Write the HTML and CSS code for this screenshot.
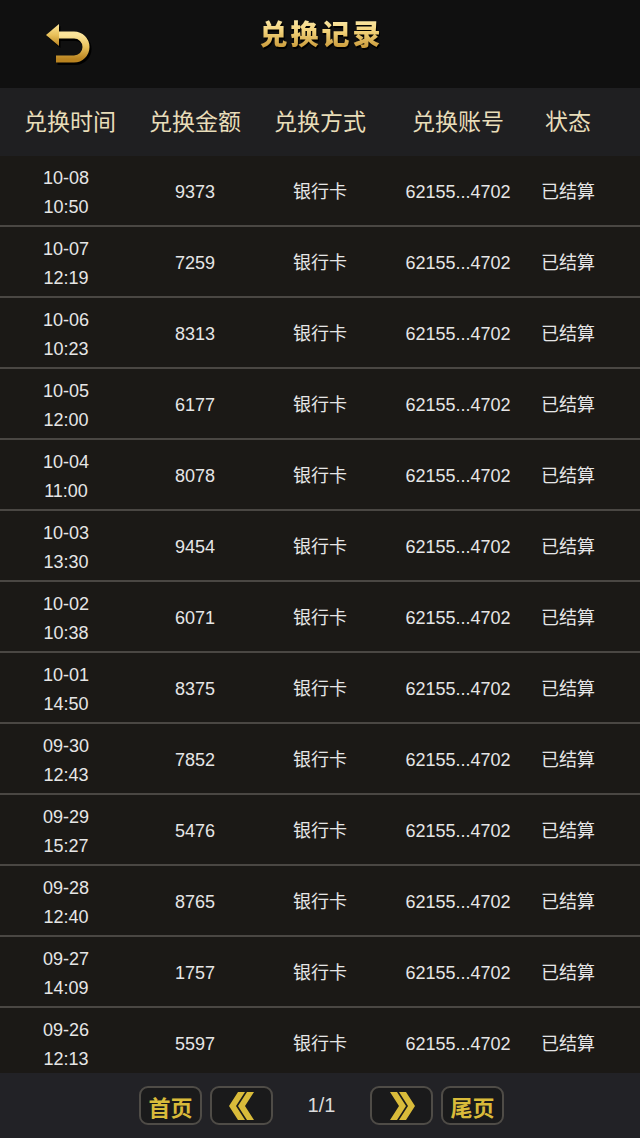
FILE: index.html
```html
<!DOCTYPE html>
<html lang="zh-CN">
<head>
<meta charset="utf-8">
<title>兑换记录</title>
<link rel="stylesheet" href="styles.css">
</head>
<body>
<div class="app">
  <header class="topbar">
    <button class="back" aria-label="返回">
      <svg width="52" height="48" viewBox="0 0 52 48">
        <defs>
          <linearGradient id="g" x1="0" y1="0" x2="0" y2="1">
            <stop offset="0" stop-color="#fbe49a"/>
            <stop offset="0.5" stop-color="#e9c15a"/>
            <stop offset="1" stop-color="#b98320"/>
          </linearGradient>
        </defs>
        <path d="M14 15 H32 A12 12 0 0 1 32 39 H14" fill="none" stroke="#000" stroke-width="8" transform="translate(1.5,2)"/>
        <polygon points="4,15 17,4 17,26" fill="#000" transform="translate(1.5,2)"/>
        <path d="M14 15 H32 A12 12 0 0 1 32 39 H14" fill="none" stroke="url(#g)" stroke-width="7"/>
        <polygon points="4,15 17,4 17,26" fill="url(#g)"/>
      </svg>
    </button>
    <h1 class="title">兑换记录</h1>
  </header>

  <div class="cols colhead">
    <span>兑换时间</span>
    <span>兑换金额</span>
    <span>兑换方式</span>
    <span>兑换账号</span>
    <span>状态</span>
  </div>

  <div class="list">
    <div class="cols row"><span class="time">10-08<br>10:50</span><span>9373</span><span>银行卡</span><span>62155...4702</span><span>已结算</span></div>
    <div class="cols row"><span class="time">10-07<br>12:19</span><span>7259</span><span>银行卡</span><span>62155...4702</span><span>已结算</span></div>
    <div class="cols row"><span class="time">10-06<br>10:23</span><span>8313</span><span>银行卡</span><span>62155...4702</span><span>已结算</span></div>
    <div class="cols row"><span class="time">10-05<br>12:00</span><span>6177</span><span>银行卡</span><span>62155...4702</span><span>已结算</span></div>
    <div class="cols row"><span class="time">10-04<br>11:00</span><span>8078</span><span>银行卡</span><span>62155...4702</span><span>已结算</span></div>
    <div class="cols row"><span class="time">10-03<br>13:30</span><span>9454</span><span>银行卡</span><span>62155...4702</span><span>已结算</span></div>
    <div class="cols row"><span class="time">10-02<br>10:38</span><span>6071</span><span>银行卡</span><span>62155...4702</span><span>已结算</span></div>
    <div class="cols row"><span class="time">10-01<br>14:50</span><span>8375</span><span>银行卡</span><span>62155...4702</span><span>已结算</span></div>
    <div class="cols row"><span class="time">09-30<br>12:43</span><span>7852</span><span>银行卡</span><span>62155...4702</span><span>已结算</span></div>
    <div class="cols row"><span class="time">09-29<br>15:27</span><span>5476</span><span>银行卡</span><span>62155...4702</span><span>已结算</span></div>
    <div class="cols row"><span class="time">09-28<br>12:40</span><span>8765</span><span>银行卡</span><span>62155...4702</span><span>已结算</span></div>
    <div class="cols row"><span class="time">09-27<br>14:09</span><span>1757</span><span>银行卡</span><span>62155...4702</span><span>已结算</span></div>
    <div class="cols row"><span class="time">09-26<br>12:13</span><span>5597</span><span>银行卡</span><span>62155...4702</span><span>已结算</span></div>
  </div>

  <footer class="pager">
    <button class="pbtn">首页</button>
    <button class="pbtn" aria-label="上一页">
      <svg width="26" height="28" viewBox="0 0 26 28">
        <polygon points="9,0 16,0 7,14 16,28 9,28 0,14" fill="#d9bb3a"/>
        <polygon points="18,0 25,0 16,14 25,28 18,28 9,14" fill="#d9bb3a"/>
      </svg>
    </button>
    <span class="pnum">1/1</span>
    <button class="pbtn" aria-label="下一页">
      <svg width="26" height="28" viewBox="0 0 26 28">
        <polygon points="1,0 8,0 17,14 8,28 1,28 10,14" fill="#d9bb3a"/>
        <polygon points="10,0 17,0 26,14 17,28 10,28 19,14" fill="#d9bb3a"/>
      </svg>
    </button>
    <button class="pbtn">尾页</button>
  </footer>
</div>
</body>
</html>
```

FILE: styles.css
```css
html, body {
  margin: 0;
  padding: 0;
  background: #101010;
}

.app {
  width: 640px;
  height: 1138px;
  display: flex;
  flex-direction: column;
  font-family: "Liberation Sans", "Noto Sans CJK SC", sans-serif;
  overflow: hidden;
}

.topbar {
  height: 88px;
  flex: none;
  background: #101010;
  display: grid;
  grid-template-columns: 120px 400px 120px;
  align-items: start;
}

.back {
  margin: 20px 0 0 42px;
  padding: 0;
  border: 0;
  background: none;
  width: 52px;
  height: 48px;
  display: block;
}

.title {
  margin: 15px 0 0;
  text-align: center;
  font-family: "Noto Sans CJK SC", sans-serif;
  font-weight: 900;
  font-size: 28px;
  line-height: 36px;
  letter-spacing: 3px;
  padding-left: 3px;
  background: linear-gradient(180deg, #fff0b8 0%, #f2d27a 45%, #c2902e 100%);
  -webkit-background-clip: text;
  background-clip: text;
  color: transparent;
  filter: drop-shadow(1px 2px 0 #000);
}

.cols {
  display: grid;
  grid-template-columns: 132px 126px 124px 152px 68px;
  align-items: center;
  text-align: center;
}

.colhead {
  height: 68px;
  box-sizing: border-box;
  padding-bottom: 4px;
  flex: none;
  background: #1f1f21;
  color: #e8ddb9;
  font-family: "Noto Sans CJK SC", sans-serif;
  font-size: 23px;
  white-space: nowrap;
}

.colhead span:first-child {
  padding-left: 8px;
}

.list {
  flex: 1;
  overflow: hidden;
  background: #1b1916;
}

.row {
  height: 71px;
  box-sizing: border-box;
  border-bottom: 2px solid #4a4743;
  background: #1b1916;
  color: #e6e6e6;
  font-size: 18px;
  line-height: 29px;
  white-space: nowrap;
  padding-top: 4px;
}

.time {
  line-height: 29px;
}

.pager {
  height: 65px;
  flex: none;
  background: #222226;
  display: flex;
  align-items: center;
  justify-content: center;
  gap: 8px;
  padding-left: 3px;
}

.pbtn {
  width: 63px;
  height: 39px;
  box-sizing: border-box;
  border: 2px solid #4f4c47;
  border-radius: 9px;
  background: #1a1a1b;
  color: #d9bb3a;
  font-family: "Noto Sans CJK SC", sans-serif;
  font-weight: 700;
  font-size: 22px;
  line-height: 1;
  padding: 0;
  display: flex;
  align-items: center;
  justify-content: center;
}

.pnum {
  width: 81px;
  text-align: center;
  color: #dcdcdc;
  font-size: 20px;
}
```
